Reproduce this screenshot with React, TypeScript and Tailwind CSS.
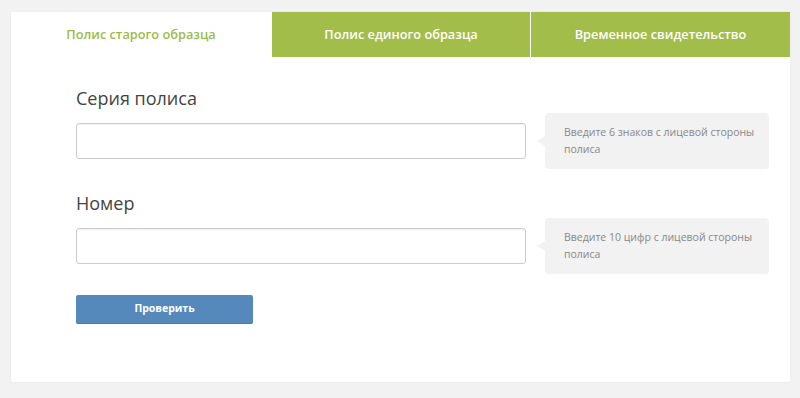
import { useState } from 'react';

const tabs = ['Полис старого образца', 'Полис единого образца', 'Временное свидетельство'];

function Field({ label, hint }: { label: string; hint: string }) {
  return (
    <div>
      <label className="block text-[18px] leading-[24px] text-[#444] mb-[3px]">{label}</label>
      <div className="flex items-center h-[56px]">
        <input
          type="text"
          className="w-[450px] h-[36px] rounded-[3px] border border-[#cccccc] bg-white px-3 text-sm shadow-[inset_0_1px_1px_rgba(0,0,0,0.06)] focus:outline-none"
        />
        <div className="relative ml-[19px] w-[224px] h-[56px] rounded-[4px] bg-[#f2f2f2] pl-[19px] pr-[8px] pt-[11px] text-[10.5px] leading-[17px] text-[#888]">
          <span className="absolute left-[-8px] top-[23px] h-0 w-0 border-y-[5px] border-r-[8px] border-y-transparent border-r-[#f2f2f2]" />
          {hint}
        </div>
      </div>
    </div>
  );
}

export default function App() {
  const [active, setActive] = useState(0);

  return (
    <div className="min-h-screen bg-[#f2f2f2] pt-[12px] pl-[11px] pb-[16px] font-['Open_Sans',sans-serif]">
      <div className="w-[779px] h-[370px] rounded-[2px] bg-white shadow-[0_0_3px_rgba(0,0,0,0.05)]">
        <div className="grid grid-cols-[260px_258px_259px] gap-x-px h-[45px]">
          {tabs.map((tab, i) => (
            <button
              key={tab}
              onClick={() => setActive(i)}
              className={
                i === active
                  ? 'bg-white text-[12.75px] font-semibold text-[#9cbb48]'
                  : 'bg-[#a3bd4b] text-[12.75px] font-semibold text-white'
              }
            >
              {tab}
            </button>
          ))}
        </div>
        <div className="pl-[65px] pt-[29px]">
          <Field label="Серия полиса" hint="Введите 6 знаков с лицевой стороны полиса" />
          <div className="mt-[22px]">
            <Field label="Номер" hint="Введите 10 цифр с лицевой стороны полиса" />
          </div>
          <button className="mt-[21px] w-[177px] h-[29px] rounded-[2px] bg-[#5589bc] border-b border-[#4a7aab] text-[10.5px] font-bold text-white">
            Проверить
          </button>
        </div>
      </div>
    </div>
  );
}
